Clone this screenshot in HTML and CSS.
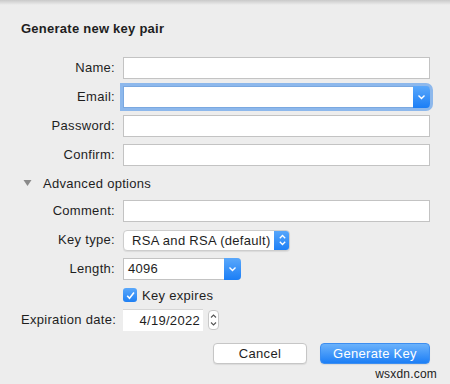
FILE: index.html
```html
<!DOCTYPE html>
<html>
<head>
<meta charset="utf-8">
<link rel="stylesheet" href="styles.css">
</head>
<body>
<div class="sheet">
  <div class="topshadow"></div>
  <h1 class="title">Generate new key pair</h1>
  <div class="form">
    <label class="lbl">Name:</label>
    <div class="field"></div>

    <label class="lbl">Email:</label>
    <div class="combo focus">
      <div class="combo-text"></div>
      <div class="combo-btn"><svg width="9" height="6" viewBox="0 0 9 6"><path d="M1.5 1.5 L4.5 4.5 L7.5 1.5" fill="none" stroke="#fff" stroke-width="1.4"/></svg></div>
    </div>

    <label class="lbl">Password:</label>
    <div class="field"></div>

    <label class="lbl">Confirm:</label>
    <div class="field"></div>

    <div class="disclosure">
      <svg class="tri" width="9" height="8" viewBox="0 0 9 8"><path d="M0.5 1 L8.5 1 L4.5 7 Z" fill="#8a8a8a"/></svg>
      <span>Advanced options</span>
    </div>

    <label class="lbl">Comment:</label>
    <div class="field"></div>

    <label class="lbl">Key type:</label>
    <div class="cell">
      <div class="popup">
        <span class="popup-text">RSA and RSA (default)</span>
        <div class="popup-btn"><svg width="9" height="14" viewBox="0 0 9 14"><path d="M1.8 5.2 L4.5 2.5 L7.2 5.2 M1.8 8.8 L4.5 11.5 L7.2 8.8" fill="none" stroke="#fff" stroke-width="1.3"/></svg></div>
      </div>
    </div>

    <label class="lbl">Length:</label>
    <div class="cell">
      <div class="combo short">
        <div class="combo-text">4096</div>
        <div class="combo-btn"><svg width="9" height="6" viewBox="0 0 9 6"><path d="M1.5 1.5 L4.5 4.5 L7.5 1.5" fill="none" stroke="#fff" stroke-width="1.4"/></svg></div>
      </div>
    </div>

    <div class="spacer"></div>
    <div class="check-row">
      <span class="checkbox"><svg width="13" height="13" viewBox="0 0 13 13"><path d="M3.2 6.8 L5.5 9.2 L10 3.6" fill="none" stroke="#fff" stroke-width="1.6"/></svg></span>
      <span>Key expires</span>
    </div>

    <label class="lbl">Expiration date:</label>
    <div class="cell date-row">
      <div class="date">4/19/2022</div>
      <div class="stepper"><svg width="9" height="18" viewBox="0 0 9 18"><path d="M2 6.5 L4.5 4 L7 6.5 M2 11.5 L4.5 14 L7 11.5" fill="none" stroke="#555" stroke-width="1.1"/></svg></div>
    </div>
  </div>
  <div class="buttons">
    <button class="btn">Cancel</button>
    <button class="btn primary">Generate Key</button>
  </div>
  <div class="watermark">wsxdn.com</div>
</div>
</body>
</html>
```
FILE: styles.css
```css
html, body {
  margin: 0;
  padding: 0;
  background: #ececec;
}
body {
  font-family: "Liberation Sans", Arial, sans-serif;
  font-size: 13px;
  color: #1e1e1e;
  width: 450px;
  height: 384px;
  overflow: hidden;
}
.sheet {
  position: relative;
  width: 450px;
  height: 384px;
  background: #ededed;
}
.topshadow {
  height: 5px;
  background: linear-gradient(#c9c9c9, #ededed);
}
.title {
  margin: 0;
  padding: 16px 0 0 21px;
  font-size: 13px;
  font-weight: bold;
  line-height: 16px;
  height: 16px;
  letter-spacing: 0.25px;
}
.form {
  display: grid;
  grid-template-columns: 94px 1fr;
  column-gap: 8px;
  row-gap: 7px;
  padding: 20px 20px 0 21px;
  letter-spacing: 0.3px;
}
.lbl {
  text-align: right;
  line-height: 22px;
  height: 22px;
  white-space: nowrap;
}
.field {
  background: #fff;
  border: 1px solid #c3c3c3;
  box-sizing: border-box;
  height: 22px;
}
.cell {
  display: flex;
  align-items: center;
  height: 22px;
}
.combo {
  display: flex;
  height: 22px;
  box-sizing: border-box;
  border: 1px solid #c3c3c3;
  border-right: none;
  background: #fff;
  border-radius: 0 4px 4px 0;
}
.combo.focus {
  box-shadow: 0 0 0 3px #8db8ec;
  border-color: #7aa8e0;
}
.combo.short {
  width: 118px;
}
.combo-text {
  flex: 1;
  padding-left: 4px;
  line-height: 20px;
}
.combo-btn {
  width: 17px;
  margin: -1px 0;
  border-radius: 0 4px 4px 0;
  background: linear-gradient(#5aa8fb, #1b7ef6);
  display: flex;
  align-items: center;
  justify-content: center;
}
.disclosure {
  grid-column: 1 / 3;
  height: 20px;
  display: flex;
  align-items: center;
  gap: 11px;
  padding-left: 2px;
  letter-spacing: 0.3px;
}
.tri {
  margin-top: -1px;
}
.popup {
  display: flex;
  align-items: center;
  width: 167px;
  height: 21px;
  box-sizing: border-box;
  background: #fff;
  border: 1px solid #cdcdcd;
  border-radius: 4px;
  box-shadow: 0 1px 1px rgba(0,0,0,0.08);
  overflow: hidden;
}
.popup-text {
  flex: 1;
  padding-left: 8px;
}
.popup-btn {
  width: 16px;
  height: 21px;
  margin-right: -1px;
  background: linear-gradient(#5aa8fb, #1b7ef6);
  display: flex;
  align-items: center;
  justify-content: center;
}
.spacer {
  height: 14px;
}
.check-row {
  display: flex;
  align-items: center;
  gap: 5px;
  height: 14px;
  margin-top: 1px;
}
.checkbox {
  width: 14px;
  height: 14px;
  border-radius: 3px;
  background: linear-gradient(#5aa8fb, #1f80f4);
  display: flex;
  align-items: center;
  justify-content: center;
}
.date-row {
  gap: 5px;
}
.date {
  width: 80px;
  height: 22px;
  box-sizing: border-box;
  background: #fff;
  border-top: 1px solid #d6d6d6;
  text-align: right;
  padding-right: 3px;
  line-height: 21px;
}
.stepper {
  width: 11px;
  height: 20px;
  box-sizing: border-box;
  background: #fff;
  border: 1px solid #c8c8c8;
  border-radius: 4px;
  display: flex;
  align-items: center;
  justify-content: center;
}
.buttons {
  display: flex;
  justify-content: flex-end;
  gap: 13px;
  padding: 12px 20px 0 0;
}
.btn {
  font-family: "Liberation Sans", Arial, sans-serif;
  font-size: 13px;
  letter-spacing: 0.3px;
  height: 21px;
  padding: 0;
  border: 1px solid #c6c6c6;
  border-radius: 4px;
  background: #fff;
  color: #1e1e1e;
  width: 94px;
  box-shadow: 0 1px 1px rgba(0,0,0,0.08);
}
.btn.primary {
  width: 110px;
  border-color: #3d8ef0;
  background: linear-gradient(#6bb2fb, #1d7ff6);
  color: #fff;
}
.watermark {
  position: absolute;
  right: 13px;
  bottom: 3px;
  font-size: 12px;
  color: #222;
  letter-spacing: 0.2px;
}
```
